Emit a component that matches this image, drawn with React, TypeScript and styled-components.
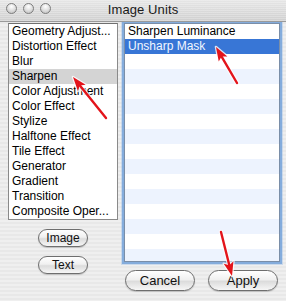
import styled, { createGlobalStyle } from "styled-components";

const GlobalStyle = createGlobalStyle`
  html, body {
    margin: 0;
    padding: 0;
    background: #ececec;
  }
  body {
    font-family: "Liberation Sans", Arial, sans-serif;
  }
`;

const categories = [
  "Geometry Adjust...",
  "Distortion Effect",
  "Blur",
  "Sharpen",
  "Color Adjustment",
  "Color Effect",
  "Stylize",
  "Halftone Effect",
  "Tile Effect",
  "Generator",
  "Gradient",
  "Transition",
  "Composite Oper...",
];

const units = ["Sharpen Luminance", "Unsharp Mask"];

type Pt = [number, number];

// red annotation arrows: tail -> tip
const arrows: { tail: Pt; tip: Pt }[] = [
  { tail: [106, 118], tip: [73, 77] },
  { tail: [237, 83], tip: [216, 47] },
  { tail: [221, 232], tip: [232, 276] },
];

function arrowParts(tail: Pt, tip: Pt) {
  const dx = tip[0] - tail[0];
  const dy = tip[1] - tail[1];
  const len = Math.hypot(dx, dy);
  const ux = dx / len;
  const uy = dy / len;
  const headLen = 14;
  const headHalf = 5;
  const bx = tip[0] - ux * headLen;
  const by = tip[1] - uy * headLen;
  const head = [
    [tip[0], tip[1]],
    [bx - uy * headHalf, by + ux * headHalf],
    [bx + ux * 3, by + uy * 3],
    [bx + uy * headHalf, by - ux * headHalf],
  ]
    .map((p) => p.join(","))
    .join(" ");
  const shaftEnd: Pt = [bx + ux * 4, by + uy * 4];
  return { head, shaftEnd };
}

function Arrows() {
  return (
    <Overlay width="286" height="301" viewBox="0 0 286 301">
      {arrows.map(({ tail, tip }, i) => {
        const { head, shaftEnd } = arrowParts(tail, tip);
        return (
          <g key={i}>
            <line
              x1={tail[0]}
              y1={tail[1]}
              x2={shaftEnd[0]}
              y2={shaftEnd[1]}
              stroke="#fff"
              strokeWidth="4.5"
              strokeLinecap="round"
              opacity="0.8"
            />
            <polygon points={head} fill="#fff" stroke="#fff" strokeWidth="2.5" strokeLinejoin="round" opacity="0.8" />
            <line
              x1={tail[0]}
              y1={tail[1]}
              x2={shaftEnd[0]}
              y2={shaftEnd[1]}
              stroke="#e3141b"
              strokeWidth="2.4"
              strokeLinecap="round"
            />
            <polygon points={head} fill="#e3141b" />
          </g>
        );
      })}
    </Overlay>
  );
}

export default function App() {
  return (
    <>
      <GlobalStyle />
      <Window>
        <TitleBar>
          <Lights>
            <Light />
            <Light />
            <Light />
          </Lights>
          <Title>Image Units</Title>
        </TitleBar>
        <Content>
          <LeftColumn>
            <CategoryList>
              {categories.map((c) => (
                <CategoryRow key={c} selected={c === "Sharpen"}>
                  {c}
                </CategoryRow>
              ))}
            </CategoryList>
            <SmallButton>Image</SmallButton>
            <SmallButton>Text</SmallButton>
          </LeftColumn>
          <RightColumn>
            <UnitList>
              {units.map((u) => (
                <UnitRow key={u} selected={u === "Unsharp Mask"}>
                  {u}
                </UnitRow>
              ))}
            </UnitList>
            <ButtonRow>
              <PushButton>Cancel</PushButton>
              <PushButton>Apply</PushButton>
            </ButtonRow>
          </RightColumn>
        </Content>
        <Arrows />
      </Window>
    </>
  );
}

const Window = styled.div`
  position: relative;
  width: 286px;
  height: 301px;
  overflow: hidden;
  background: repeating-linear-gradient(
    to bottom,
    #efefef 0px,
    #efefef 2px,
    #e8e8e8 2px,
    #e8e8e8 4px
  );
`;

const TitleBar = styled.div`
  position: relative;
  height: 21px;
  display: flex;
  align-items: center;
  justify-content: center;
  border-bottom: 1px solid #9a9a9a;
  background:
    repeating-linear-gradient(
      to bottom,
      rgba(255, 255, 255, 0.25) 0px,
      rgba(255, 255, 255, 0.25) 1px,
      rgba(0, 0, 0, 0) 1px,
      rgba(0, 0, 0, 0) 2px
    ),
    linear-gradient(to bottom, #e6e6e6, #cfcfcf);
`;

const Lights = styled.div`
  position: absolute;
  left: 6px;
  top: 3px;
  display: flex;
  gap: 6px;
`;

const Light = styled.span`
  width: 9px;
  height: 9px;
  border-radius: 50%;
  border: 1px solid #7d7d7d;
  background: radial-gradient(circle at 50% 30%, #ffffff 0%, #e2e2e2 45%, #b9b9b9 100%);
`;

const Title = styled.div`
  font-size: 13px;
  color: #1a1a1a;
  margin-top: -3px;
  letter-spacing: 0.1px;
`;

const Content = styled.div`
  display: flex;
  gap: 6px;
  padding: 1px 0 0 8px;
`;

const LeftColumn = styled.div`
  width: 110px;
  display: flex;
  flex-direction: column;
  align-items: center;
  gap: 9px;
`;

const CategoryList = styled.div`
  box-sizing: border-box;
  width: 110px;
  height: 197px;
  margin-bottom: 0;
  background: #fff;
  border: 1px solid #8a8a8a;
  border-top-color: #6f6f6f;
`;

const CategoryRow = styled.div<{ selected?: boolean }>`
  height: 15px;
  line-height: 15px;
  padding-left: 3px;
  font-size: 12px;
  color: #000;
  white-space: nowrap;
  overflow: hidden;
  background: ${(p) => (p.selected ? "#d4d4d4" : "transparent")};
`;

const SmallButton = styled.button`
  box-sizing: border-box;
  width: 50px;
  height: 18px;
  padding: 0;
  font-family: "Liberation Sans", Arial, sans-serif;
  font-size: 12px;
  color: #111;
  border: 1px solid #6e6e6e;
  border-radius: 9px;
  background: linear-gradient(to bottom, #ffffff 0%, #f0f0f0 45%, #dcdcdc 55%, #f6f6f6 100%);
  box-shadow: 0 1px 1px rgba(0, 0, 0, 0.18);
`;

const RightColumn = styled.div`
  width: 156px;
  display: flex;
  flex-direction: column;
  gap: 8px;
`;

const UnitList = styled.div`
  box-sizing: border-box;
  height: 239px;
  border: 1px solid #7a8ea8;
  box-shadow: 0 0 0 2px rgba(110, 158, 216, 0.75), 0 0 0 3px rgba(140, 180, 230, 0.35);
  background: repeating-linear-gradient(
    to bottom,
    #ffffff 0px,
    #ffffff 15px,
    #edf3fe 15px,
    #edf3fe 30px
  );
`;

const UnitRow = styled.div<{ selected?: boolean }>`
  height: 15px;
  line-height: 15px;
  padding-left: 3px;
  font-size: 12px;
  white-space: nowrap;
  color: ${(p) => (p.selected ? "#f2f6ff" : "#000")};
  background: ${(p) => (p.selected ? "#3876d6" : "transparent")};
`;

const ButtonRow = styled.div`
  display: flex;
  justify-content: space-between;
  padding: 0 2px 0 1px;
`;

const PushButton = styled.button`
  box-sizing: border-box;
  width: 70px;
  height: 21px;
  padding: 0;
  font-family: "Liberation Sans", Arial, sans-serif;
  font-size: 13px;
  color: #111;
  border: 1px solid #6e6e6e;
  border-radius: 11px;
  background: linear-gradient(to bottom, #ffffff 0%, #f0f0f0 45%, #dcdcdc 55%, #f6f6f6 100%);
  box-shadow: 0 1px 1px rgba(0, 0, 0, 0.18);
`;

const Overlay = styled.svg`
  position: absolute;
  left: 0;
  top: 0;
  pointer-events: none;
`;
